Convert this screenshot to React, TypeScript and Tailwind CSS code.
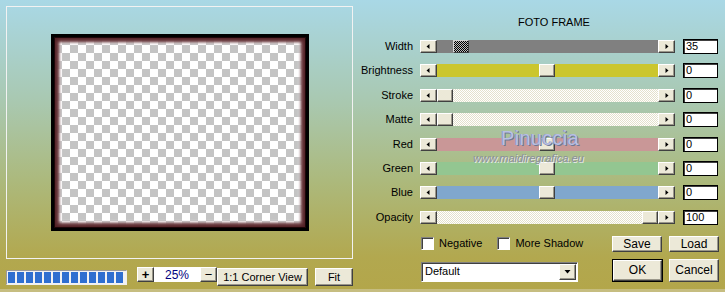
import React from 'react';

const raised =
  'bg-[#ece9d8] border border-t-white border-l-white border-r-[#404040] border-b-[#404040] shadow-[inset_-1px_-1px_#9a978a]';

const lightDither =
  'bg-[conic-gradient(#ffffff_25%,#e4e1cc_0_50%,#ffffff_0_75%,#e4e1cc_0)] bg-[length:2px_2px]';

type Row = {
  label: string;
  track: string;
  thumb: string;
  value: string;
  dark?: boolean;
};

const rows: Row[] = [
  { label: 'Width', track: 'bg-[#808080]', thumb: 'ml-[16px]', value: '35', dark: true },
  { label: 'Brightness', track: 'bg-[#cbc62e]', thumb: 'ml-[102px]', value: '0' },
  { label: 'Stroke', track: lightDither, thumb: 'ml-0', value: '0' },
  { label: 'Matte', track: lightDither, thumb: 'ml-0', value: '0' },
  { label: 'Red', track: 'bg-[#c99797]', thumb: 'ml-[102px]', value: '0' },
  { label: 'Green', track: 'bg-[#93c691]', thumb: 'ml-[102px]', value: '0' },
  { label: 'Blue', track: 'bg-[#80a7cd]', thumb: 'ml-[102px]', value: '0' },
  { label: 'Opacity', track: lightDither, thumb: 'ml-auto', value: '100' },
];

const Arrow = ({ dir }: { dir: 'left' | 'right' | 'down' }) => (
  <svg width="7" height="7" viewBox="0 0 7 7">
    {dir === 'left' && <polygon points="4.5,1 4.5,6 1.5,3.5" fill="#000" />}
    {dir === 'right' && <polygon points="2.5,1 2.5,6 5.5,3.5" fill="#000" />}
    {dir === 'down' && <polygon points="0.5,2 6.5,2 3.5,5.5" fill="#000" />}
  </svg>
);

const SliderRow = ({ row }: { row: Row }) => (
  <div className="flex h-[15px] items-center">
    <div className="w-[53px] whitespace-nowrap text-right leading-[13px]">{row.label}</div>
    <div className="ml-[7px] flex h-[13px] w-[255px]">
      <div className={`${raised} flex w-[17px] items-center justify-center`}>
        <Arrow dir="left" />
      </div>
      <div className={`flex flex-1 ${row.track}`}>
        {row.dark ? (
          <div
            className={`${row.thumb} h-full w-[16px] border border-t-[#d0d0d0] border-l-[#d0d0d0] border-r-[#404040] border-b-[#404040] bg-[conic-gradient(#000_25%,#bdbdbd_0_50%,#000_0_75%,#bdbdbd_0)] bg-[length:2px_2px]`}
          />
        ) : (
          <div className={`${row.thumb} ${raised} h-full w-[16px]`} />
        )}
      </div>
      <div className={`${raised} flex w-[17px] items-center justify-center`}>
        <Arrow dir="right" />
      </div>
    </div>
    <div className="ml-[8px] h-[15px] w-[35px] border border-black bg-white pl-[2px] leading-[13px] shadow-[inset_1px_1px_#404040]">
      {row.value}
    </div>
  </div>
);

const Checkbox = () => (
  <div className="h-[13px] w-[13px] shrink-0 border border-t-[#808080] border-l-[#808080] border-r-white border-b-white bg-white shadow-[inset_1px_1px_#404040]" />
);

export default function App() {
  return (
    <div
      className="relative flex h-[292px] w-[725px] overflow-hidden bg-[linear-gradient(180deg,#a9d8e6_0%,#a9c8b0_35%,#acb97c_62%,#b2a84f_88%,#b3a64a_100%)] text-[11px] text-black"
      style={{ fontFamily: '"Liberation Sans", Arial, sans-serif' }}
    >
      {/* preview side */}
      <div className="flex w-[360px] flex-col pl-[6px] pt-[6px]">
        <div className="flex h-[253px] w-[347px] items-center justify-center border border-[#f2f2f2]">
          <div className="h-[197px] w-[258px] border-[3px] border-black bg-[conic-gradient(#c4c4c4_25%,#ffffff_0_50%,#c4c4c4_0_75%,#ffffff_0)] bg-[length:16px_16px] shadow-[inset_0_0_0_1px_#1c0608,inset_0_0_4px_3px_#4d1d21,inset_0_0_3px_5px_#7c4a4f,inset_0_0_3px_7px_rgba(255,255,255,0.45)]" />
        </div>
        <div className="mt-[8px] flex items-start">
          <div className="mt-[3px] flex h-[15px] w-[121px] gap-[2px] border border-t-[#9a9a9a] border-l-[#9a9a9a] border-r-[#f0f0f0] border-b-[#f0f0f0] bg-[#f2f2f2] p-[1px]">
            {Array.from({ length: 13 }).map((_, i) => (
              <div key={i} className="h-full w-[7px] bg-[#2f6fd0]" />
            ))}
          </div>
          <div className={`${raised} ml-[10px] flex h-[15px] w-[17px] items-center justify-center text-[13px] font-bold leading-none`}>
            +
          </div>
          <div className="flex h-[15px] w-[46px] items-center justify-center bg-white text-[12px] text-[#000080]">
            25%
          </div>
          <div className={`${raised} flex h-[15px] w-[17px] items-center justify-center text-[13px] leading-none`}>
            −
          </div>
          <div className={`${raised} mt-[1px] flex h-[18px] w-[91px] items-center justify-center whitespace-nowrap text-[11px]`}>
            1:1 Corner View
          </div>
          <div className={`${raised} ml-[7px] mt-[1px] flex h-[18px] w-[38px] items-center justify-center text-[11px]`}>
            Fit
          </div>
        </div>
      </div>

      {/* controls side */}
      <div className="relative flex flex-1 flex-col pt-[16px]">
        <div className="pl-[158px] leading-[13px]">FOTO FRAME</div>
        <div className="mt-[10px] flex flex-col gap-[9.4px]">
          {rows.map((r) => (
            <SliderRow key={r.label} row={r} />
          ))}
        </div>
        <div className="mt-[11px] flex pl-[61px]">
          <div className="flex w-[157px] flex-col">
            <div className="flex h-[16px] items-center whitespace-nowrap">
              <Checkbox />
              <span className="ml-[5px]">Negative</span>
              <div className="ml-[15px]">
                <Checkbox />
              </div>
              <span className="ml-[5px]">More Shadow</span>
            </div>
            <div className="mt-[10px] flex h-[20px] w-[157px] items-center border border-t-[#808080] border-l-[#808080] border-r-white border-b-white bg-white shadow-[inset_1px_1px_#404040]">
              <span className="flex-1 pl-[3px]">Default</span>
              <div className={`${raised} mr-[1px] flex h-[16px] w-[17px] items-center justify-center`}>
                <Arrow dir="down" />
              </div>
            </div>
          </div>
          <div className="ml-[34px] flex flex-col">
            <div className="flex gap-[7px]">
              <div className={`${raised} flex h-[16px] w-[50px] items-center justify-center text-[12px]`}>Save</div>
              <div className={`${raised} flex h-[16px] w-[50px] items-center justify-center text-[12px]`}>Load</div>
            </div>
            <div className="mt-[7px] flex gap-[6px]">
              <div className="h-[23px] w-[51px] border border-black">
                <div className={`${raised} flex h-full w-full items-center justify-center text-[12px]`}>OK</div>
              </div>
              <div className={`${raised} flex h-[23px] w-[50px] items-center justify-center text-[12px]`}>Cancel</div>
            </div>
          </div>
        </div>

        {/* watermark */}
        <div className="pointer-events-none absolute left-[141px] top-[128px] text-[20px] leading-none tracking-[0.3px] text-[#b8c0e4] [text-shadow:1px_1px_0_#6d7796,-1px_0_0_#8f98b8]">
          Pinuccia
        </div>
        <div className="pointer-events-none absolute left-[113px] top-[153px] text-[11px] italic leading-none text-[#8a8f9c] [text-shadow:1px_1px_0_#e8e8e8]">
          www.maidiregrafica.eu
        </div>
      </div>

      <div className="absolute bottom-0 left-0 h-[3px] w-full bg-[#c6bd80]" />
    </div>
  );
}
